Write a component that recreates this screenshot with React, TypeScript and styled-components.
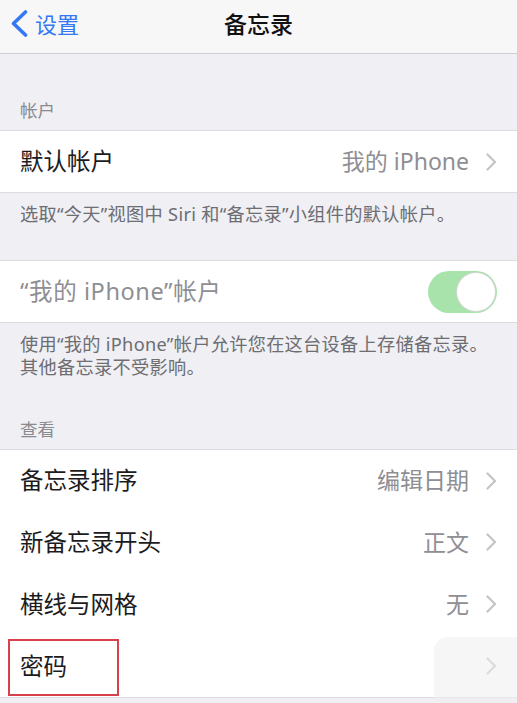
import React from "react";
import styled, { createGlobalStyle } from "styled-components";

const GlobalStyle = createGlobalStyle`
  html, body {
    margin: 0;
    padding: 0;
    background: #efeff4;
    font-family: "Noto Sans", "Noto Sans CJK SC", sans-serif;
  }
`;

const Page = styled.div`
  width: 517px;
  height: 703px;
  overflow: hidden;
  background: #efeff4;
  position: relative;
`;

const NavBar = styled.div`
  height: 54px;
  box-sizing: border-box;
  padding-bottom: 6px;
  background: #f7f7f7;
  border-bottom: 1px solid #cfcfd2;
  display: grid;
  grid-template-columns: 1fr auto 1fr;
  align-items: center;
`;

const Back = styled.div`
  display: flex;
  align-items: center;
  gap: 7px;
  padding-left: 11px;
  color: #3478f6;
  font-size: 22px;
  line-height: 26px;
`;

const NavTitle = styled.div`
  font-size: 23px;
  line-height: 26px;
  font-weight: 500;
  color: #111;
`;

const Header = styled.div<{ $top: number }>`
  padding: ${(p) => p.$top}px 20px 9px;
  font-size: 17.5px;
  line-height: 22px;
  color: #8a8a8f;
`;

const Footer = styled.div<{ $bottom: number }>`
  padding: 10px 20px 0;
  margin-bottom: ${(p) => p.$bottom}px;
  font-size: 18.2px;
  line-height: 23px;
  letter-spacing: 0.3px;
  color: #6d6d72;
`;

const Group = styled.div`
  background: #fff;
  border-top: 1px solid #dcdce0;
  border-bottom: 1px solid #dcdce0;
`;

const Row = styled.div`
  position: relative;
  height: 61px;
  box-sizing: border-box;
  padding: 0 20px 3px;
  display: flex;
  align-items: center;

  & + & {
    box-shadow: inset 20px 1px 0 #fff, inset 0 1px 0 #e2e2e6;
    height: 62px;
  }
`;

const Label = styled.div<{ $muted?: boolean }>`
  flex: 1;
  font-size: 23.5px;
  color: ${(p) => (p.$muted ? "#8e8e93" : "#1c1c1e")};
  letter-spacing: ${(p) => (p.$muted ? "0.6px" : "0")};
`;

const Value = styled.div`
  font-size: 23px;
  color: #8e8e93;
  margin-right: 17px;
`;

const Toggle = styled.div`
  width: 69px;
  height: 42px;
  border-radius: 21px;
  background: #a7e3ab;
  position: relative;
  flex-shrink: 0;
  margin-top: 3px;
`;

const Knob = styled.div`
  position: absolute;
  top: 2px;
  right: 2px;
  width: 38px;
  height: 38px;
  border-radius: 50%;
  background: #fff;
  box-shadow: 0 0 0 1px #d2d6d2;
`;

const Marker = styled.div`
  position: absolute;
  left: 8px;
  top: 4px;
  width: 107px;
  height: 53px;
  border: 2px solid #d8414b;
`;

const Floater = styled.div`
  position: absolute;
  right: -12px;
  bottom: -12px;
  width: 95px;
  height: 72px;
  border-radius: 14px;
  background: rgba(238, 238, 238, 0.55);
`;

const ChevronBox = styled.div`
  display: flex;
  margin-top: 3px;
`;

const Chevron = () => (
  <ChevronBox>
    <svg width="11" height="18" viewBox="0 0 11 18">
      <polyline
        points="1.5,1.5 9,9 1.5,16.5"
        fill="none"
        stroke="#c4c4c8"
        strokeWidth="2.2"
        strokeLinecap="round"
        strokeLinejoin="round"
      />
    </svg>
  </ChevronBox>
);

const BackArrow = () => (
  <svg width="17" height="27" viewBox="0 0 17 27">
    <polyline
      points="14.5,2 2.5,13.5 14.5,25"
      fill="none"
      stroke="#3478f6"
      strokeWidth="3.6"
      strokeLinecap="round"
      strokeLinejoin="round"
    />
  </svg>
);

const viewRows = [
  { label: "备忘录排序", value: "编辑日期" },
  { label: "新备忘录开头", value: "正文" },
  { label: "横线与网格", value: "无" },
];

export default function App() {
  return (
    <Page>
      <GlobalStyle />
      <NavBar>
        <Back>
          <BackArrow />
          设置
        </Back>
        <NavTitle>备忘录</NavTitle>
        <div />
      </NavBar>

      <Header $top={45}>帐户</Header>
      <Group>
        <Row>
          <Label>默认帐户</Label>
          <Value>我的 iPhone</Value>
          <Chevron />
        </Row>
      </Group>
      <Footer $bottom={34}>选取“今天”视图中 Siri 和“备忘录”小组件的默认帐户。</Footer>

      <Group>
        <Row>
          <Label $muted>“我的 iPhone”帐户</Label>
          <Toggle>
            <Knob />
          </Toggle>
        </Row>
      </Group>
      <Footer $bottom={0}>
        使用“我的 iPhone”帐户允许您在这台设备上存储备忘录。
        <br />
        其他备忘录不受影响。
      </Footer>

      <Header $top={39}>查看</Header>
      <Group>
        {viewRows.map((r) => (
          <Row key={r.label}>
            <Label>{r.label}</Label>
            <Value>{r.value}</Value>
            <Chevron />
          </Row>
        ))}
        <Row>
          <Floater />
          <Label>密码</Label>
          <Chevron />
          <Marker />
        </Row>
      </Group>
    </Page>
  );
}
